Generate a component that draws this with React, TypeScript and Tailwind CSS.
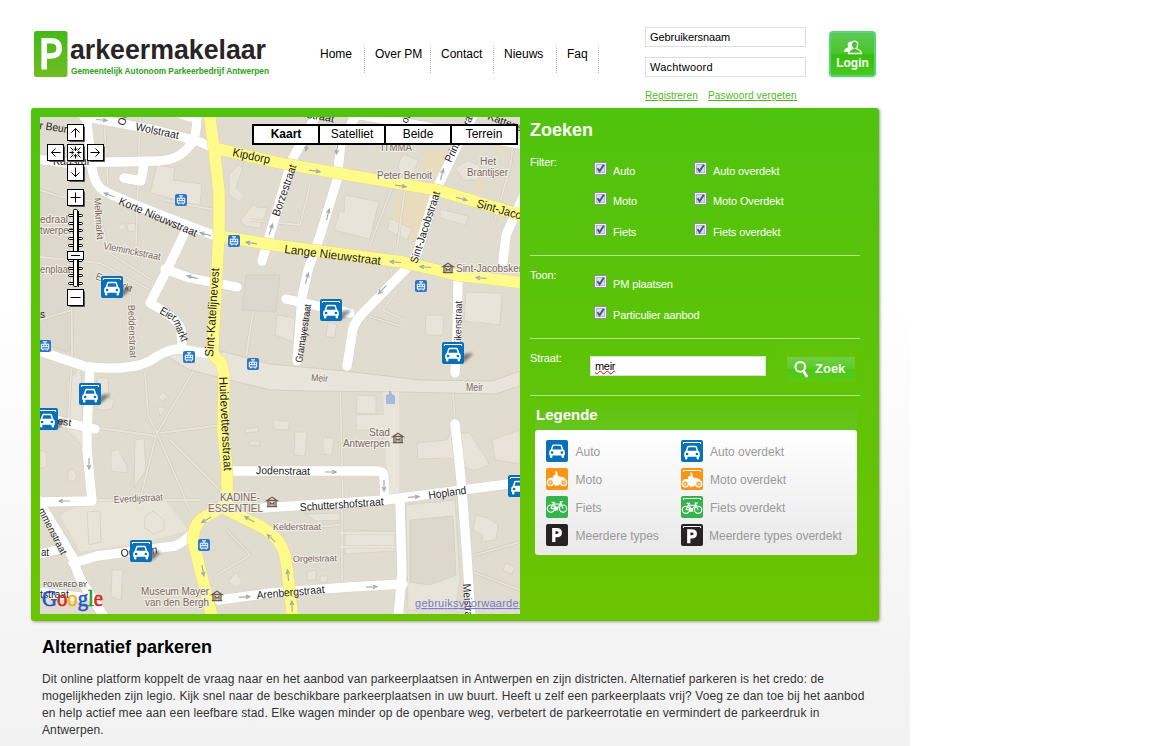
import React from "react";

type Pt = [number, number];

const whiteRoads: string[] = [
  "M86 112 L91 160 Q93 184 103 190 Q115 198 213 235",
  "M84 117 L97 119 L155 130 L197 141 L214 148",
  "M36 159 L67 163 L158 161 Q180 160 190 145 Q197 139 197 112",
  "M144 164 L141 181 L124 178",
  "M262 261 L286 180 L292 160 L318 112",
  "M297 361 L302 297 L308 270 L320 236 L337 180 L341 142 L358 112",
  "M347 366 L352 335 Q352 325 362 314 L407 268 Q415 260 418 250 L437 188 L457 146 L475 112",
  "M286 299 L350 313",
  "M503 262 L506 235 L524 195",
  "M455 373 L457 335 L458 280",
  "M455 424 L458 450 L462 490 L467 557 L471 620",
  "M262 508 L385 500 L524 482",
  "M230 471 L375 471 Q384 471 384 477 L385 500",
  "M400 503 L402 573 L398 620",
  "M218 600 L270 593 L350 587 L403 584",
  "M36 350 L87 367 Q130 371 150 361 Q168 348 180 349 L210 354",
  "M182 349 L181 330 Q180 320 150 303 L166 272 L187 228",
  "M165 269 L190 278 L237 287",
  "M90 367 L87 430 L87 450 L92 501 L36 502",
  "M55 420 L95 429",
  "M38 500 L73 558 Q79 580 86 588 L106 620",
  "M36 555 L65 548",
  "M73 563 L97 556 L175 546 Q187 540 192 533",
  "M36 592 L80 597",
  "M176 112 L190 117",
  "M345 112 L525 145",
];

const yellowRoads: string[] = [
  "M209 112 L214 148 L219 192 L219 232 L213 345 Q211 357 221 362 L224 374 L223 430 L227 470 L227 504 L203 518 Q191 526 194 545 L213 620",
  "M214 148 L280 163 L337 173 L437 190 L524 216",
  "M219 236 L280 246 L403 262 L457 275 L524 283",
  "M227 510 L262 527 Q283 540 286 560 L293 620",
];

const buildings: string[] = [
  "M157 165 L175 168 L173 180 L202 184 L200 206 L150 193Z",
  "M229 175 L238 165 L243 167 L236 188 L244 195 L240 202 L229 195Z",
  "M240 221 L254 204 L258 208 L268 207 L260 228 L246 226Z",
  "M345 195 L379 202 L370 239 L334 230 L340 210 L344 213Z",
  "M398 165 L403 154 L418 160 L413 177 L400 174Z",
  "M455 168 L468 160 L480 166 L478 180 L464 180Z",
  "M440 209 L468 216 L466 225 L440 218Z", "M390 218 L412 229 L407 240 L387 230Z",
  "M466 292 L502 293 L500 325 L464 321Z", "M277 315 L295 318 L293 342 L275 335Z",
  "M328 322 L337 324 L334 338 L326 336Z", "M426 315 L443 315 L443 335 L425 335Z",
  "M357 395 L376 396 L376 414 L356 413Z", "M273 420 L290 421 L288 430 L274 429Z",
  "M295 432 L307 432 L305 456 L294 455Z", "M323 437 L334 438 L332 455 L323 454Z",
  "M356 415 L390 414 L390 431 L356 430Z", "M417 443 L447 440 L450 433 L470 433 L490 465 L473 471 L450 458 L418 459Z",
  "M67 382 L81 367 L83 446 L67 430Z", "M97 378 L108 378 L109 398 L114 400 L112 409 L98 410Z",
  "M111 452 L118 449 L127 466 L127 473 L111 471Z", "M135 440 L144 438 L146 470 L134 488Z",
  "M87 512 L100 511 L101 542 L89 545Z",
  "M144 518 L153 511 L164 520 L164 530 L154 534 L145 528Z", "M112 570 L123 570 L121 600 L111 597Z",
  "M305 514 L340 513 L340 520 L316 521Z", "M345 530 L395 531 L395 551 L345 554Z",
  "M476 515 L488 518 L498 525 L496 540 L482 542 L483 535 L473 530Z",
  "M492 440 L520 430 L520 464 L495 460Z", "M505 563 L515 567 L512 574 L503 571Z",
  "M406 505 L455 500 L460 580 L455 610 L408 610Z",
  "M228 582 L236 572 L242 581 L237 588Z", "M307 572 L316 570 L316 580 L307 580Z",
  "M320 576 L328 576 L327 582 L320 582Z",
  "M118 226 L123 223 L126 228 L120 231Z", "M127 224 L137 223 L138 232 L128 231Z",
  "M158 397 L163 392 L169 397 L162 401Z", "M157 406 L166 408 L160 416Z",
  "M245 429 L258 427 L258 432 L245 433Z", "M249 441 L260 441 L260 446 L249 445Z",
  "M40 450 L46 452 L47 466 L40 469Z", "M68 472 L72 469 L77 474 L75 481 L68 481Z",
];

const darkBlocks: string[] = [
  "M410 520 L453 516 L456 575 L430 585 L410 582Z",
  "M242 310 L246 275 L280 275 L276 312Z",
  "M40 190 L62 197 L72 210 L73 340 L68 352 L40 343Z",
];

const paths: string[] = [
  "M40 190 L62 197 L96 202 L109 253 L157 283", "M71 205 L72 355 L68 430", "M40 257 L100 263 L150 290",
  "M130 288 L132 357", "M145 372 L148 415 L157 433 L190 510", "M160 433 L230 424", "M157 433 L197 365",
  "M92 427 L156 436 L140 500", "M40 500 L200 500", "M340 385 L343 500", "M342 510 L342 585", "M230 500 L170 440",
  "M340 533 L395 533", "M340 547 L395 547", "M268 530 L340 525", "M452 375 L455 424", "M495 220 L511 163 L515 123",
  "M408 180 L404 195 L397 250", "M370 245 L395 180", "M362 314 L400 326", "M390 268 L397 290 L383 310 L404 320",
  "M227 530 L250 555 L217 575", "M165 200 L215 210", "M72 310 L40 320", "M104 120 L108 185", "M140 118 L136 245",
  "M310 185 L300 225 L250 220", "M475 555 L520 542", "M468 570 L520 590", "M253 312 L246 357",
];

type MapText = { x: number; y: number; t: string; w: number; r?: number; s?: number; c?: string };
const dark = "#222";
const brown = "#79675c";
const labels: MapText[] = [
  { x: 39, y: 129, t: "r Beurs", w: 33, r: 8, s: 11, c: dark },
  { x: 135, y: 130, t: "Wolstraat", w: 44, r: 12, s: 11, c: dark },
  { x: 53, y: 165, t: "Kaasrui", w: 36, s: 11, c: dark },
  { x: 232, y: 156, t: "Kipdorp", w: 38, r: 12, s: 12, c: dark },
  { x: 118, y: 204, t: "Korte Nieuwstraat", w: 84, r: 23, s: 11, c: dark },
  { x: 284, y: 253, t: "Lange Nieuwstraat", w: 97, r: 7, s: 12, c: dark },
  { x: 279, y: 217, t: "Borzestraat", w: 54, r: -71, s: 11, c: dark },
  { x: 417, y: 264, t: "Sint-Jacobstraat", w: 75, r: -72, s: 11, c: dark },
  { x: 451, y: 163, t: "Prinsesstraat", w: 58, r: -64, s: 11, c: dark },
  { x: 476, y: 207, t: "Sint-Jacobs", w: 58, r: 16, s: 12, c: dark },
  { x: 94, y: 198, t: "Melkmarkt", w: 42, r: 86, s: 10, c: brown },
  { x: 103, y: 249, t: "Vleminckstraat", w: 58, r: 11, s: 10, c: brown },
  { x: 40, y: 223, t: "edraal", w: 28, s: 10, c: brown },
  { x: 40, y: 234, t: "twerpen", w: 34, s: 10, c: brown },
  { x: 40, y: 273, t: "enplaats", w: 35, s: 10, c: brown },
  { x: 95, y: 279, t: "Eiermarkt", w: 38, r: 20, s: 10, c: brown },
  { x: 128, y: 305, t: "Beddenstraat", w: 53, r: 88, s: 10, c: brown },
  { x: 302, y: 363, t: "Gramayestraat", w: 59, r: -81, s: 10, c: dark },
  { x: 213, y: 357, t: "Sint-Katelijnevest", w: 89, r: -86, s: 12, c: dark },
  { x: 219, y: 377, t: "Huidevettersstraat", w: 94, r: 87, s: 12, c: dark },
  { x: 461, y: 347, t: "Eikenstraat", w: 46, r: -89, s: 10, c: dark },
  { x: 311, y: 381, t: "Meir", w: 17, r: 3, s: 10, c: brown },
  { x: 466, y: 391, t: "Meir", w: 17, s: 10, c: brown },
  { x: 369, y: 436, t: "Stad", w: 21, s: 10, c: brown },
  { x: 343, y: 447, t: "Antwerpen", w: 47, s: 10, c: brown },
  { x: 377, y: 179, t: "Peter Benoit", w: 55, s: 10, c: brown },
  { x: 381, y: 151, t: "ITMMA", w: 31, s: 10, c: brown },
  { x: 480, y: 165, t: "Het", w: 16, s: 10, c: brown },
  { x: 467, y: 176, t: "Brantijser", w: 41, s: 10, c: brown },
  { x: 456, y: 272, t: "Sint-Jacobskerk", w: 71, s: 10, c: brown },
  { x: 256, y: 474, t: "Jodenstraat", w: 54, r: 1, s: 11, c: dark },
  { x: 300, y: 511, t: "Schuttershofstraat", w: 84, r: -4, s: 11, c: dark },
  { x: 429, y: 499, t: "Hopland", w: 38, r: -8, s: 11, c: dark },
  { x: 114, y: 503, t: "Everdijstraat", w: 49, r: -3, s: 10, c: brown },
  { x: 220, y: 501, t: "KADINE-", w: 40, s: 10.5, c: brown },
  { x: 208, y: 512, t: "ESSENTIEL", w: 55, s: 10.5, c: brown },
  { x: 273, y: 530, t: "Kelderstraat", w: 48, s: 9, c: brown },
  { x: 293, y: 562, t: "Orgelstraat", w: 44, r: -1, s: 9, c: brown },
  { x: 257, y: 599, t: "Arenbergstraat", w: 68, r: -5, s: 11, c: dark },
  { x: 141, y: 595, t: "Museum Mayer", w: 68, s: 10, c: brown },
  { x: 145, y: 606, t: "van den Bergh", w: 64, s: 10, c: brown },
  { x: 38, y: 510, t: "mmenstraat", w: 51, r: 63, s: 10, c: dark },
  { x: 41, y: 556, t: "at", w: 8, s: 10, c: dark },
  { x: 121, y: 557, t: "Oudaan", w: 37, r: -6, s: 11, c: dark },
  { x: 40, y: 598, t: "tstraat", w: 29, s: 10, c: dark },
  { x: 57, y: 424, t: "est", w: 14, r: 9, s: 10, c: dark },
  { x: 463, y: 584, t: "Meistraat", w: 42, r: 86, s: 11, c: dark },
  { x: 125, y: 126, t: "Ou", w: 13, r: -78, s: 11, c: dark },
  { x: 40, y: 318, t: "s", w: 5, s: 10, c: dark },
  { x: 159, y: 313, t: "Eier", w: 17, r: 30, s: 11, c: dark },
  { x: 173, y: 321, t: "markt", w: 23, r: 68, s: 11, c: dark },
  { x: 297, y: 116, t: "erstraat", w: 37, r: 10, s: 11, c: dark },
  { x: 487, y: 119, t: "Kattenstraat", w: 58, r: 20, s: 10, c: dark },
  { x: 407, y: 124, t: "or", w: 9, r: -65, s: 10, c: dark },
];

const arrows: [number, number, number][] = [
  [102, 120, 5], [109, 195, 200], [205, 234, 195], [251, 243, 188], [271, 229, -72], [315, 171, 8], [401, 186, 8],
  [462, 199, 15], [442, 174, -75], [337, 149, 98], [328, 214, -76], [395, 262, 185], [425, 267, 185], [307, 146, 105],
  [307, 278, -75], [382, 290, 133], [481, 278, 185], [192, 277, 195], [89, 464, 90], [64, 501, 180],
  [331, 472, 0], [384, 486, 90], [414, 497, -4], [206, 520, 150], [249, 519, 210], [271, 538, 223], [288, 575, -96],
  [292, 606, -92], [203, 571, 80], [245, 597, -4], [372, 587, -2],
];

const trams: Pt[] = [[181, 200], [234, 241], [421, 286], [45, 346], [189, 357], [253, 364], [204, 545]];
const museums: Pt[] = [[448, 268], [398, 438], [272, 502], [217, 596]];
const cars: Pt[] = [[101, 276], [320, 299], [442, 342], [79, 383], [36, 408], [130, 540], [508, 475]];

const controls: [number, number, string][] = [
  [75, 132, "M0 5 V-4 M-4 0 L0 -4 L4 0"],
  [55, 152, "M5 0 H-4 M0 -4 L-4 0 L0 4"],
  [95, 152, "M-5 0 H4 M0 -4 L4 0 L0 4"],
  [75, 172, "M0 -5 V4 M-4 0 L0 4 L4 0"],
  [75, 152, "M-6 0 H-2 M2 0 H6 M0 -6 V-2 M0 2 V6 M-5 -5 L-2 -2 M5 -5 L2 -2 M-5 5 L-2 2 M5 5 L2 2 M-4 -1.5 L-2 0 L-4 1.5 M4 -1.5 L2 0 L4 1.5 M-1.5 -4 L0 -2 L1.5 -4 M-1.5 4 L0 2 L1.5 4"],
  [75, 197, "M-5 0 H5 M0 -5 V5"],
  [75, 297, "M-5 0 H5"],
];

function CarShape({ covered }: { covered?: boolean }) {
  return (
    <g transform={covered ? "translate(0 1.4)" : undefined}>
      <path
        fill="#fff"
        fillRule="evenodd"
        d="M6.2 5.2 Q6.5 4.4 7.5 4.4 H14.5 Q15.5 4.4 15.8 5.2 L17.3 9.6 Q18.8 10.3 18.8 12 V15.3 H18 V17 Q18 18 16.8 18 T15.6 17 V15.4 H6.4 V17 Q6.4 18 5.2 18 T4 17 V15.3 H3.2 V12 Q3.2 10.3 4.7 9.6 Z M7.5 5.8 L6.3 9.4 H15.7 L14.5 5.8 Z M6.1 11.3 A1.3 1.3 0 1 0 6.1 13.9 A1.3 1.3 0 1 0 6.1 11.3 M15.9 11.3 A1.3 1.3 0 1 0 15.9 13.9 A1.3 1.3 0 1 0 15.9 11.3"
      />
    </g>
  );
}

const Roof = () => <path d="M2.4 4 V2.5 H19.6 V4" fill="none" stroke="#fff" strokeWidth="1" />;

function LegendIcon({ kind, covered }: { kind: string; covered?: boolean }) {
  const fill = { auto: "#0871ba", moto: "#ff9313", fiets: "#35b44b", meer: "#272223" }[kind];
  const shift = covered ? "translate(0 1.2)" : undefined;
  return (
    <svg width="22" height="22" viewBox="0 0 22 22" className="shrink-0">
      <rect width="22" height="22" rx="2" fill={fill} />
      {covered && <Roof />}
      {kind === "auto" && <CarShape covered={covered} />}
      {kind === "moto" && (
        <g transform={shift}>
          <g fill="none" stroke="#fff" strokeWidth="1.4">
            <circle cx="4.4" cy="14.6" r="3" />
            <circle cx="17.6" cy="14.6" r="3" />
          </g>
          <circle cx="4.4" cy="14.6" r="1" fill="#fff" />
          <circle cx="17.6" cy="14.6" r="1" fill="#fff" />
          <path fill="#fff" d="M9.3 3.6 Q11.5 2.6 11.4 5 L12 8 L15.6 9 L19.5 10 L17.6 11.6 L14.8 12.2 L13.6 17 L9 18 L7.4 13 L5.8 11.4 L1.5 11.4 L3 10 L6.8 9.8 L7.4 7.4 L9.8 6.4Z" />
        </g>
      )}
      {kind === "fiets" && (
        <g fill="none" stroke="#fff" strokeWidth="1.1" transform={shift}>
          <circle cx="4.9" cy="12.6" r="3.6" />
          <circle cx="17.1" cy="12.6" r="3.6" />
          <path d="M4.9 12.6 L7.6 7 L10.4 12.6 H4.9 M7.6 8 H15 L10.4 12.6 M17.1 12.6 L14.2 5.8 H17 M5.5 6.2 H9" />
          <path d="M8.8 11.4 H11.6 V14 H8.8Z" fill="#fff" />
        </g>
      )}
      {kind === "meer" && (
        <path
          transform={shift}
          fill="none"
          stroke="#fff"
          strokeWidth="3.3"
          d="M7.8 18 V5.6 H10.8 Q14.3 5.6 14.3 8.6 T10.8 11.7 H8"
        />
      )}
    </svg>
  );
}

function CityMap() {
  return (
    <svg className="block" width="480" height="497" viewBox="40 117 480 497" fontFamily='"Liberation Sans", Arial, sans-serif'>
      <defs>
        <filter id="soft" x="-50%" y="-50%" width="200%" height="200%">
          <feGaussianBlur stdDeviation="1.6" />
        </filter>
      </defs>
      <rect x="40" y="117" width="480" height="497" fill="#e0dcd0" />
      <path d="M92 500 L165 500 L188 530 L150 541 L80 552 L60 515Z" fill="#e8e4d8" />
      <path d="M400 190 L433 197 L413 242 L407 240 L412 229 L392 219Z M424 150 L455 155 L443 180 L422 175Z M497 130 L520 135 L516 150 L494 150Z M475 178 L486 182 L484 192 L474 190Z" fill="#e8dcbd" />
      <g fill="#e8e4d9" stroke="#d5d0c3" strokeWidth=".8">
        {buildings.map((d) => <path key={d} d={d} />)}
      </g>
      <g fill="#dcd8cd" stroke="#d3cec0" strokeWidth=".8">
        {darkBlocks.map((d) => <path key={d} d={d} />)}
      </g>
      <g fill="none" strokeLinejoin="round">
        {paths.map((d) => <path key={d} d={d} stroke="#d3cdbe" strokeWidth="3" />)}
        {paths.map((d) => <path key={d} d={d} stroke="#e9e5da" strokeWidth="1.8" />)}
      </g>
      <path d="M160 352 L225 352 L270 364 L345 371 L420 380 L492 381 L520 371 V386 L495 394 L400 392 L310 391 L270 390 L190 370Z" fill="#e9e5da" stroke="#d0cabb" strokeWidth=".8" />
      <path d="M383 392 H399 V500 H388 Z" fill="#e9e5da" />
      <g fill="none" strokeLinecap="round" strokeLinejoin="round">
        {whiteRoads.map((d) => <path key={d} d={d} stroke="#d9d4c8" strokeWidth="10.6" />)}
        {whiteRoads.map((d) => <path key={d} d={d} stroke="#fff" strokeWidth="9.4" />)}
        {yellowRoads.map((d) => <path key={d} d={d} stroke="#e6d98d" strokeWidth="12.4" />)}
        {yellowRoads.map((d) => <path key={d} d={d} stroke="#fffb8b" strokeWidth="11.4" />)}
      </g>
      <path d="M386 404 V395 L389 394 L389 391 H391 L392 394 L395 396 V404Z" fill="#a5bade" />
      {arrows.map(([x, y, r], i) => (
        <path key={i} transform={`translate(${x} ${y}) rotate(${r})`} d="M-6 0 H5 M1 -1.8 L5 0 L1 1.8" fill="none" stroke="#a2adae" strokeWidth="1.2" />
      ))}
      {labels.map((l, i) => (
        <text
          key={i}
          transform={`translate(${l.x} ${l.y}) rotate(${l.r ?? 0})`}
          fontSize={l.s}
          fill={l.c}
          textLength={l.w}
          lengthAdjust="spacingAndGlyphs"
          stroke={l.c === dark ? "none" : "#f3f0e9"}
          strokeWidth="2"
          paintOrder="stroke"
        >
          {l.t}
        </text>
      ))}
      {trams.map(([x, y]) => (
        <g key={`${x}-${y}`} transform={`translate(${x - 6} ${y - 6})`}>
          <rect width="12" height="12" rx="2" fill="#2c76c9" />
          <path d="M4 1.8 H8 M6 1.8 V4 M2.3 4.2 H9.7 V9 H2.3Z M2.3 6.7 H9.7 M4.8 4.2 V6.7 M7.3 4.2 V6.7 M3.8 9 V10.5 M8.2 9 V10.5" stroke="#fff" fill="none" />
        </g>
      ))}
      {museums.map(([x, y]) => (
        <g key={`${x}-${y}`} transform={`translate(${x - 6} ${y - 6})`}>
          <path d="M1 4.5 L6 1.3 L11 4.5Z M2 4.5 H10 V10.5 H2Z M.8 10.7 H11.2" fill="#f0ece4" stroke="#6e5b50" strokeWidth="1.3" />
          <path d="M4 9.5 V6.6 L6 8.3 L8 6.6 V9.5" fill="none" stroke="#6e5b50" strokeWidth="1.2" />
        </g>
      ))}
      {cars.map(([x, y]) => (
        <g key={`${x}-${y}`} transform={`translate(${x} ${y})`}>
          <path d="M15 21 L22 12 L31 11 Q29 15 22 20Z" fill="#000" opacity=".45" filter="url(#soft)" />
          <rect width="22" height="22" rx="2" fill="#0871ba" />
          <Roof />
          <CarShape covered />
        </g>
      ))}
      <text x="43" y="587" fontSize="7" fill="#444" textLength="44" fontFamily="'DejaVu Sans', sans-serif" stroke="#f3f0e9" strokeWidth="1.5" paintOrder="stroke">POWERED BY</text>
      <text x="42" y="606" fontSize="23" textLength="61" lengthAdjust="spacingAndGlyphs" fontFamily="'Liberation Serif', serif" strokeWidth=".7">
        <tspan fill="#2456d3" stroke="#2456d3">G</tspan>
        <tspan fill="#dc2a20" stroke="#dc2a20">o</tspan>
        <tspan fill="#efb713" stroke="#efb713">o</tspan>
        <tspan fill="#2456d3" stroke="#2456d3">g</tspan>
        <tspan fill="#19a029" stroke="#19a029">l</tspan>
        <tspan fill="#dc2a20" stroke="#dc2a20">e</tspan>
      </text>
      <text x="415" y="607" fontSize="11" fill="#7777cc" textLength="110" textDecoration="underline">gebruiksvoorwaarden</text>
      <g fill="none" stroke="#000">
        {controls.map(([x, y, d]) => (
          <g key={`${x}-${y}`} transform={`translate(${x + 0.5} ${y + 0.5})`}>
            <path d="M-6 9 H9 V-6" stroke="#555" />
            <rect x="-8" y="-8" width="16" height="16" fill="#fff" />
            <path d={d} />
          </g>
        ))}
        {Array.from({ length: 10 }, (_, i) => 215.5 + i * 7.5).map((y) => (
          <rect key={y} x="68.5" y={Math.floor(y) - 0.5} width="14" height="2" rx="1" fill="#fff" />
        ))}
        <rect x="73.5" y="209.5" width="4" height="77" rx="1" fill="#fff" />
        <path d="M78.5 211 V287" />
        <rect x="67.5" y="251.5" width="16" height="8" fill="#fff" />
        <path d="M71 255.5 H80" />
      </g>
    </svg>
  );
}

function Check({ label, className }: { label: string; className: string }) {
  return (
    <label className={`flex items-start text-[11px] tracking-[-0.12px] text-white ${className}`}>
      <svg width="13" height="13" viewBox="0 0 13 13" className="mr-1.5 shrink-0">
        <rect x=".5" y=".5" width="12" height="12" fill="#f4f4f4" stroke="#8e8f8f" />
        <rect x="2.5" y="2.5" width="8" height="8" fill="#d9dce2" stroke="#b4b9c4" />
        <path d="M3.5 6.2 L5.6 9.2 L9.8 2.8" fill="none" stroke="#3d5495" strokeWidth="1.9" />
      </svg>
      <span className="mt-[2px] leading-[14px]">{label}</span>
    </label>
  );
}

const nav = [
  { t: "Home", c: "w-[55px]" },
  { t: "Over PM", c: "w-[66px]" },
  { t: "Contact", c: "w-[63px]" },
  { t: "Nieuws", c: "w-[63px]" },
  { t: "Faq", c: "w-[42px]" },
];

const legend = [
  { k: "auto", t: "Auto" },
  { k: "moto", t: "Moto" },
  { k: "fiets", t: "Fiets" },
  { k: "meer", t: "Meerdere types" },
];

export default function App() {
  return (
    <div className="h-[746px] w-full overflow-hidden bg-white font-['Liberation_Sans',Arial,sans-serif]">
      <div className="h-full w-[910px] bg-[linear-gradient(#fff_0px,#fff_300px,#f5f5f5_610px,#f2f2f2_746px)] pl-[31px]">
        <header className="flex h-[108px] items-start">
          <div className="ml-[3px] mt-[31px] flex w-[276px]">
            <svg width="34" height="46" viewBox="0 0 34 46">
              <defs>
                <linearGradient id="logo" x2="0" y2="1">
                  <stop stopColor="#43b918" />
                  <stop offset="1" stopColor="#72bd22" />
                </linearGradient>
              </defs>
              <rect width="33.5" height="46" rx="2.5" fill="url(#logo)" />
              <path d="M10.2 38.5 V9.8 H15.5 Q25.2 9 25.2 17.2 T15.5 25 H11" fill="none" stroke="#fff" strokeWidth="5.6" />
            </svg>
            <svg width="236" height="46" viewBox="68 31 236 46" fontWeight="bold">
              <text x="70" y="59" fontSize="27.5" fill="#292425" textLength="196" lengthAdjust="spacingAndGlyphs">arkeermakelaar</text>
              <text x="71" y="74" fontSize="8.5" fill="#2ca214" textLength="198" lengthAdjust="spacingAndGlyphs">Gemeentelijk Autonoom Parkeerbedrijf Antwerpen</text>
            </svg>
          </div>
          <nav className="mt-[46px] flex w-[335px] text-xs leading-4 text-black">
            {nav.map((n) => (
              <a key={n.t} className={`h-[27px] whitespace-nowrap border-r border-dotted border-[#bbb] pl-[10px] ${n.c}`}>{n.t}</a>
            ))}
          </nav>
          <div className="mt-[27px] flex w-[184px] flex-col text-[11px]">
            <div className="h-5 w-[161px] border border-[#ddd] bg-white pl-1 leading-[19px] tracking-[-0.08px]">Gebruikersnaam</div>
            <div className="mt-[10px] h-5 w-[161px] border border-[#ddd] bg-white pl-1 leading-[19px] tracking-[0.2px]">Wachtwoord</div>
            <div className="mt-3 flex gap-[10px] whitespace-nowrap text-[10px] leading-[14px] text-[#4cb91a] underline">
              <a className="w-[53px] tracking-[0.1px]">Registreren</a>
              <a className="tracking-[0.15px]">Paswoord vergeten</a>
            </div>
          </div>
          <button className="mt-[31px] flex h-[46px] w-[47px] flex-col items-center rounded-[4px] border-2 border-[#57d477] bg-[linear-gradient(#5cc954,#49c52a_48%,#37bf0d_52%,#46ca1b)] pt-[7px] text-[12px] font-bold leading-[16px] text-white shadow-sm">
            <svg width="20" height="15" viewBox="0 0 20 15" className="shrink-0">
              <path d="M9 12 H1 Q1 8.5 5.5 7 Q4 5 5 3 Q6.5 .5 9.5 2" fill="#fff" />
              <path d="M5.5 13.5 Q6 10 10 8.5 Q7.5 5.5 8.5 3.2 Q9.5 1 12 1.2 Q14.8 1.5 14.7 4.5 Q14.5 7 13 8.5 Q18 10 18.5 13.5Z" fill="#47c727" stroke="#fff" strokeWidth="1.3" />
            </svg>
            Login
          </button>
        </header>

        <main className="flex h-[513px] w-[848px] rounded-[3px] bg-[linear-gradient(#50c30e,#6bc400)] pl-[9px] pt-[9px] shadow-[1px_1px_3px_#999]">
          <section className="relative h-[497px] w-[480px] overflow-hidden">
            <CityMap />
            <div className="absolute left-[212px] top-[7px] flex h-[21px] w-[266px] divide-x-2 divide-black border-2 border-black bg-white text-center text-xs leading-4 text-black">
              <b className="flex-1">Kaart</b>
              <span className="flex-1">Satelliet</span>
              <span className="flex-1">Beide</span>
              <span className="flex-1">Terrein</span>
            </div>
          </section>

          <aside className="ml-[10px] w-[330px] text-[11px] text-white">
            <h2 className="h-[35px] text-lg font-bold leading-[26px]">Zoeken</h2>
            <div className="flex h-[104px] border-b border-[#b3e38b]">
              <span className="w-16 leading-5 tracking-[-0.1px]">Filter:</span>
              <div className="w-[100px] pt-[10px]">
                <Check className="h-[30px]" label="Auto" />
                <Check className="h-[31px]" label="Moto" />
                <Check className="h-[30px]" label="Fiets" />
              </div>
              <div className="pt-[10px]">
                <Check className="h-[30px]" label="Auto overdekt" />
                <Check className="h-[31px]" label="Moto Overdekt" />
                <Check className="h-[30px]" label="Fiets overdekt" />
              </div>
            </div>
            <div className="flex h-[83px] border-b border-[#b3e38b]">
              <span className="w-16 pt-[9px] leading-5 tracking-[-0.1px]">Toon:</span>
              <div className="pt-[19px]">
                <Check className="h-[31px]" label="PM plaatsen" />
                <Check className="h-[31px]" label="Particulier aanbod" />
              </div>
            </div>
            <div className="flex h-[57px] items-start border-b border-[#b3e38b]">
              <span className="w-[60px] pt-[9px] leading-5 tracking-[-0.1px]">Straat:</span>
              <div className="mt-[17px] h-5 w-[176px] border border-[#ddd] bg-white pl-1 leading-[18px] text-black">
                <span className="tracking-[-0.3px] underline decoration-red-600 decoration-wavy decoration-[0.7px] underline-offset-[0px]">meir</span>
              </div>
              <div className="ml-[17px] mt-[12px] h-[34px] w-[77px] bg-[#65c306] pl-1 pt-[6px]">
                <button className="flex h-6 w-[68px] items-center bg-[linear-gradient(#6fd046,#5ccb2c_46%,#4cc81b_52%,#58c918)] pl-[7px] text-[13px] font-bold text-[#f0fbe9]">
                  <svg width="15" height="18" viewBox="0 0 15 18" className="mr-[6px]">
                    <circle cx="6.3" cy="6.8" r="4.9" fill="none" stroke="#fff" strokeWidth="2" />
                    <path d="M9.5 11 L12.5 16" stroke="#fff" strokeWidth="2.7" strokeLinecap="round" />
                  </svg>
                  Zoek
                </button>
              </div>
            </div>
            <div className="ml-[5px] mt-[11px] w-[322px]">
              <h3 className="h-[23px] bg-gradient-to-b from-[#60c310] to-[#66c51c] pl-px text-[15px] font-bold leading-4">Legende</h3>
              <div className="flex h-[125px] rounded-[3px] bg-gradient-to-b from-white to-[#e9e9e9] pl-[11px] pt-[10px] text-xs text-[#999]">
                <div className="flex w-[135px] flex-col gap-[6px]">
                  {legend.map((l) => (
                    <div key={l.k} className="flex h-[22px] items-center gap-[7.5px] whitespace-nowrap"><LegendIcon kind={l.k} /><span className="mt-[2px]">{l.t}</span></div>
                  ))}
                </div>
                <div className="flex flex-col gap-[6px]">
                  {legend.map((l) => (
                    <div key={l.k} className={l.k === "meer" ? "flex h-[22px] items-center gap-[6px] whitespace-nowrap" : "flex h-[22px] items-center gap-[7px] whitespace-nowrap"}><LegendIcon kind={l.k} covered /><span className="mt-[2px]">{l.t} overdekt</span></div>
                  ))}
                </div>
              </div>
            </div>
          </aside>
        </main>

        <article className="ml-[11px] pt-[14px]">
          <h1 className="text-lg font-bold leading-6 text-black">Alternatief parkeren</h1>
          <p className="mt-[12px] whitespace-nowrap text-xs leading-[17px] text-[#333]">
            <span className="tracking-[0.107px]">Dit online platform koppelt de vraag naar en het aanbod van parkeerplaatsen in Antwerpen en zijn districten. Alternatief parkeren is het credo: de</span><br />
            <span className="tracking-[0.127px]">mogelijkheden zijn legio. Kijk snel naar de beschikbare parkeerplaatsen in uw buurt. Heeft u zelf een parkeerplaats vrij? Voeg ze dan toe bij het aanbod</span><br />
            <span className="tracking-[0.123px]">en help actief mee aan een leefbare stad. Elke wagen minder op de openbare weg, verbetert de parkeerrotatie en vermindert de parkeerdruk in</span><br />
            <span className="tracking-[0.1px]">Antwerpen.</span>
          </p>
        </article>
      </div>
    </div>
  );
}
